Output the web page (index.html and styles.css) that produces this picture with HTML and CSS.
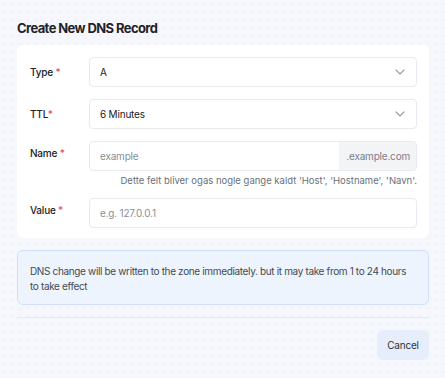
FILE: index.html
```html
<!DOCTYPE html>
<html>
<head>
<meta charset="utf-8">
<link rel="stylesheet" href="styles.css">
</head>
<body>
<div class="modal">
  <h1 class="title">Create New DNS Record</h1>
  <div class="card">
    <div class="row">
      <label class="label">Type <span class="req">*</span></label>
      <div class="control select"><span>A</span>
        <svg class="chev" width="10" height="6" viewBox="0 0 10 6"><path d="M1 1l4 4 4-4" fill="none" stroke="#9aa0aa" stroke-width="1.2" stroke-linecap="round" stroke-linejoin="round"/></svg>
      </div>
    </div>
    <div class="row">
      <label class="label">TTL<span class="req">*</span></label>
      <div class="control select"><span>6 Minutes</span>
        <svg class="chev" width="10" height="6" viewBox="0 0 10 6"><path d="M1 1l4 4 4-4" fill="none" stroke="#9aa0aa" stroke-width="1.2" stroke-linecap="round" stroke-linejoin="round"/></svg>
      </div>
    </div>
    <div class="row top">
      <label class="label">Name <span class="req">*</span></label>
      <div class="field">
        <div class="control group">
          <span class="ph grow">example</span>
          <span class="addon">.example.com</span>
        </div>
        <div class="help">Dette felt bliver ogas nogle gange kaldt 'Host', 'Hostname', 'Navn'.</div>
      </div>
    </div>
    <div class="row top">
      <label class="label">Value <span class="req">*</span></label>
      <div class="control"><span class="ph">e.g. 127.0.0.1</span></div>
    </div>
  </div>
  <div class="info">DNS change will be written to the zone immediately. but it may take from 1 to 24 hours to take effect</div>
  <hr class="divider">
  <div class="actions"><button class="btn">Cancel</button></div>
</div>
</body>
</html>
```
FILE: styles.css
```css
html, body { margin: 0; padding: 0; }
body {
  width: 445px;
  height: 378px;
  background-color: #f6f7fc;
  background-image: radial-gradient(circle, #eceef6 0.6px, transparent 0.9px);
  background-size: 8px 8px;
  font-family: Inter, "Noto Sans", sans-serif;
  color: #222;
  overflow: hidden;
}
.modal { padding: 20px 16px 0 17px; }
.title {
  margin: 0;
  font-size: 13px;
  font-weight: 700;
  letter-spacing: -0.6px;
  color: #1f2328;
  line-height: 16px;
}
.card {
  margin-top: 9px;
  background: #fff;
  border-radius: 6px;
  padding: 12px 12px 10px 13px;
  display: flex;
  flex-direction: column;
  gap: 12px;
}
.row { display: flex; align-items: center; }
.row.top { align-items: flex-start; }
.label {
  width: 59px;
  flex: none;
  font-size: 10px;
  font-weight: 500;
  color: #222;
  letter-spacing: -0.2px;
}
.row.top .label { padding-top: 6px; }
.req { color: #e05260; }
.field { flex: 1; display: flex; flex-direction: column; }
.control {
  flex: 1;
  height: 30px;
  box-sizing: border-box;
  border: 1px solid #e8eaee;
  border-radius: 4px;
  display: flex;
  align-items: center;
  padding: 0 10px;
  font-size: 10px;
  letter-spacing: -0.2px;
  color: #222;
}
.select { justify-content: space-between; padding-right: 11px; }
.chev { flex: none; }
.group { flex: none; padding: 0 0 0 10px; overflow: hidden; }
.grow { flex: 1; }
.ph { color: #8a8f98; }
.addon {
  align-self: stretch;
  display: flex;
  align-items: center;
  background: #f3f4f6;
  color: #7b8089;
  padding: 0 6px 0 7px;
}
.help {
  text-align: right;
  font-size: 9.5px;
  color: #6b7078;
  margin-top: 4px;
  letter-spacing: 0;
}
.info {
  margin-top: 12px;
  background: #eef4fd;
  border: 1px solid #cfe0f8;
  border-radius: 6px;
  padding: 13px 12px 10px 12px;
  font-size: 10px;
  line-height: 15px;
  color: #444a52;
  letter-spacing: -0.35px;
}
.divider {
  border: 0;
  border-top: 1px solid #e8eaf0;
  margin: 12px 0 0 0;
}
.actions { display: flex; justify-content: flex-end; margin-top: 12px; }
.btn {
  font-family: inherit;
  border: 0;
  background: #e6eefb;
  border-radius: 6px;
  width: 52px;
  height: 30px;
  font-size: 10px;
  color: #2b3038;
  letter-spacing: -0.2px;
}
```
